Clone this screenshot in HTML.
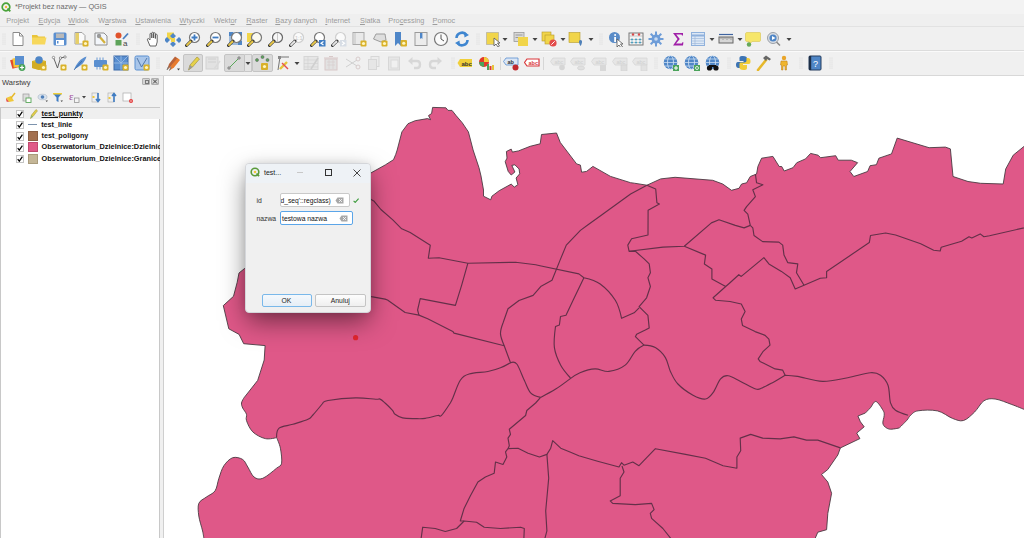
<!DOCTYPE html>
<html><head><meta charset="utf-8">
<style>
*{margin:0;padding:0;box-sizing:border-box}
html,body{width:1024px;height:538px;overflow:hidden;background:#f0f0f0;font-family:"Liberation Sans",sans-serif;position:relative}
.abs{position:absolute}
#title{left:0;top:0;width:1024px;height:14px;background:#f3f3f3}
#title span{position:absolute;left:15px;top:2px;font-size:7.3px;color:#6a6a6a;white-space:nowrap}
#menu{left:0;top:14px;width:1024px;height:12px;background:#efefef}
#menu span{position:absolute;top:2px;font-size:7.3px;color:#9c9c9c;white-space:nowrap}
#tb{left:0;top:27px;width:1024px;height:49px;background:#f0f0f0}
#map{left:164px;top:76px;width:860px;height:462px;background:#fff;overflow:hidden}
#panel{left:0;top:76px;width:163px;height:462px;background:#f0f0f0}
#split{left:163px;top:76px;width:1px;height:462px;background:#cfcfcf}
#tree{left:0;top:107px;width:160px;height:431px;background:#fff;border:1px solid #c8c8c8;border-bottom:none}
.row{position:absolute;left:0;width:158.5px;height:11px;overflow:hidden}
.row .cb{position:absolute;left:14.5px;top:1.5px;width:8.5px;height:8.5px;border:1px solid #c4c4c4;background:#fff}

.row .nm{position:absolute;left:40.6px;top:1.5px;line-height:8px;font-size:7.6px;font-weight:bold;color:#111;white-space:nowrap}
.row .sw{position:absolute;left:26.5px;top:0.5px;width:10px;height:10px}
#dlg{left:245px;top:162.8px;width:126.2px;height:150px;background:#f0f0f0;border:1px solid #d4d6da;border-radius:4px;box-shadow:0 10px 26px -2px rgba(0,0,0,0.5),0 0 8px rgba(0,0,0,0.08)}
</style></head><body>
<div id="title" class="abs"><svg class="abs" style="left:1px;top:2px" width="10" height="10" viewBox="0 0 10 10"><circle cx="5" cy="5" r="3.8" fill="none" stroke="#4aa33a" stroke-width="1.7"/><path d="M6.5 6.5 L9.3 9.3" stroke="#4aa33a" stroke-width="1.9"/><circle cx="5" cy="5" r="1.2" fill="#f0b83a"/></svg><span>*Projekt bez nazwy — QGIS</span></div>
<div id="menu" class="abs">
<span style="left:6.3px">Projekt</span><span style="left:38.5px"><u>E</u>dycja</span><span style="left:68.3px"><u>W</u>idok</span><span style="left:98.3px">W<u>a</u>rstwa</span><span style="left:135.3px"><u>U</u>stawienia</span><span style="left:179.5px"><u>W</u>tyczki</span><span style="left:214px">Wekt<u>o</u>r</span><span style="left:246.3px"><u>R</u>aster</span><span style="left:275.3px"><u>B</u>azy danych</span><span style="left:325.3px"><u>I</u>nternet</span><span style="left:360px"><u>S</u>iatka</span><span style="left:388.3px">Pro<u>c</u>essing</span><span style="left:432.5px"><u>P</u>omoc</span>
</div>
<div class="abs" style="left:0;top:26px;width:1024px;height:1px;background:#e2e2e2"></div><div id="tb" class="abs"><div class="abs" style="left:0;top:23px;width:1024px;height:1px;background:#dcdcdc"></div><div class="abs" style="left:0;top:24px;width:1024px;height:1px;background:#fafafa"></div><div class="abs" style="left:0;top:48px;width:1024px;height:1px;background:#d8d8d8"></div></div>
<div class="abs" style="left:183px;top:54px;width:20px;height:18px;background:#dadada;border:1px solid #c4c4c4;border-radius:2px"></div>
<div class="abs" style="left:224px;top:54px;width:21px;height:18px;background:#dadada;border:1px solid #c4c4c4;border-radius:2px 0 0 2px"></div>
<div class="abs" style="left:245px;top:54px;width:7px;height:18px;background:#e4e4e4;border:1px solid #c8c8c8;border-left:none"></div>
<div class="abs" style="left:252px;top:54px;width:21px;height:18px;background:#dadada;border:1px solid #c4c4c4;border-radius:2px"></div>
<div class="abs" style="left:543px;top:57px;width:1px;height:13px;background:#d6d6d6"></div>
<div class="abs" style="left:500px;top:57px;width:1px;height:13px;background:#d6d6d6"></div>
<svg class="abs" style="left:-4.0px;top:31px" width="16" height="16" viewBox="0 0 16 16"><g fill="#d2d2d2"><circle cx="7" cy="3" r=".5"/><circle cx="9" cy="3" r=".5"/><circle cx="7" cy="5" r=".5"/><circle cx="9" cy="5" r=".5"/><circle cx="7" cy="7" r=".5"/><circle cx="9" cy="7" r=".5"/><circle cx="7" cy="9" r=".5"/><circle cx="9" cy="9" r=".5"/><circle cx="7" cy="11" r=".5"/><circle cx="9" cy="11" r=".5"/><circle cx="7" cy="13" r=".5"/><circle cx="9" cy="13" r=".5"/></g></svg>
<svg class="abs" style="left:10.0px;top:31px" width="16" height="16" viewBox="0 0 16 16"><path d="M3 1.5 H9.5 L13 5 V14.5 H3 Z" fill="#fff" stroke="#8a8a8a" stroke-width="1"/><path d="M9.5 1.5 V5 H13" fill="none" stroke="#8a8a8a"/></svg>
<svg class="abs" style="left:30.5px;top:31px" width="16" height="16" viewBox="0 0 16 16"><path d="M1 4 H6 L7.5 5.5 H14 V13 H1 Z" fill="#e9c43a"/><path d="M1 6.5 H15.5 L14 13.5 H1 Z" fill="#f7d85c"/></svg>
<svg class="abs" style="left:51.5px;top:31px" width="16" height="16" viewBox="0 0 16 16"><rect x="1.5" y="1.5" width="13" height="13" rx="1.5" fill="#5a8fd0"/><rect x="4" y="2.5" width="8" height="4.5" fill="#b9b9b9"/><rect x="4" y="9" width="8" height="5" fill="#fff"/><rect x="5" y="10" width="1.5" height="2.5" fill="#5a8fd0"/></svg>
<svg class="abs" style="left:72.5px;top:31px" width="16" height="16" viewBox="0 0 16 16"><path d="M2 1.5 H9 L12 4.5 V13 H2 Z" fill="#fafafa" stroke="#a0a0a0"/><rect x="2.5" y="2" width="3.5" height="11" fill="#e6cf6a"/><rect x="9.5" y="9.5" width="6" height="6" rx="1" fill="#d9b12a"/><circle cx="12.5" cy="12.5" r="1.6" fill="#fff6c0"/></svg>
<svg class="abs" style="left:93.0px;top:31px" width="16" height="16" viewBox="0 0 16 16"><path d="M2 2 H11 L14 5 V14 H2 Z" fill="#f3f6fb" stroke="#8d8d8d"/><path d="M6 5 L12 12" stroke="#d4b13a" stroke-width="2.2"/><circle cx="6" cy="5" r="2.2" fill="#999"/></svg>
<svg class="abs" style="left:113.5px;top:31px" width="16" height="16" viewBox="0 0 16 16"><circle cx="4.5" cy="4.5" r="3" fill="#e0522b"/><path d="M9 8 L14 2.5" stroke="#4a7fc1" stroke-width="1.8"/><rect x="1.5" y="9" width="6" height="5.5" fill="#5ea35a"/><text x="9" y="14.5" font-size="8" font-family="Liberation Sans" fill="#444">a</text></svg>
<svg class="abs" style="left:129.5px;top:31px" width="16" height="16" viewBox="0 0 16 16"><g fill="#d2d2d2"><circle cx="7" cy="3" r=".5"/><circle cx="9" cy="3" r=".5"/><circle cx="7" cy="5" r=".5"/><circle cx="9" cy="5" r=".5"/><circle cx="7" cy="7" r=".5"/><circle cx="9" cy="7" r=".5"/><circle cx="7" cy="9" r=".5"/><circle cx="9" cy="9" r=".5"/><circle cx="7" cy="11" r=".5"/><circle cx="9" cy="11" r=".5"/><circle cx="7" cy="13" r=".5"/><circle cx="9" cy="13" r=".5"/></g></svg>
<svg class="abs" style="left:144.5px;top:31px" width="16" height="16" viewBox="0 0 16 16"><path d="M5 15 L2.5 9 C2 7.5 3.5 7 4.5 8.5 L5 9 V3 C5 2 6.8 2 6.8 3 V7 V2 C6.8 1 8.6 1 8.6 2 V7 V2.5 C8.6 1.5 10.4 1.5 10.4 2.5 V7.5 V4 C10.4 3 12.2 3 12.2 4 V11 L11 15 Z" fill="#fff" stroke="#555" stroke-width="0.9"/></svg>
<svg class="abs" style="left:164.5px;top:31px" width="16" height="16" viewBox="0 0 16 16"><rect x="2" y="1.5" width="7" height="7" fill="#f1d54a"/><path d="M8 2 L11 5 L8 8 L5 5Z M2 6 L5 9 L2 12 L-1 9Z M14 6 L17 9 L14 12 L11 9Z M8 10 L11 13 L8 16 L5 13Z" fill="#4f86c6"/><rect x="6" y="7" width="4" height="4" fill="#f1d54a"/></svg>
<svg class="abs" style="left:185.0px;top:31px" width="16" height="16" viewBox="0 0 16 16"><circle cx="9.5" cy="6.5" r="5" fill="#fff" stroke="#777" stroke-width="1.2"/><path d="M6 10 L1.5 14.5" stroke="#333" stroke-width="3" stroke-linecap="round"/><path d="M5.5 10.5 L2 14" stroke="#e8c84a" stroke-width="1.8" stroke-linecap="round"/><path d="M9.5 3.5 V9.5 M6.5 6.5 H12.5" stroke="#3f7cc2" stroke-width="1.8"/></svg>
<svg class="abs" style="left:206.0px;top:31px" width="16" height="16" viewBox="0 0 16 16"><circle cx="9.5" cy="6.5" r="5" fill="#fff" stroke="#777" stroke-width="1.2"/><path d="M6 10 L1.5 14.5" stroke="#333" stroke-width="3" stroke-linecap="round"/><path d="M5.5 10.5 L2 14" stroke="#e8c84a" stroke-width="1.8" stroke-linecap="round"/><path d="M6.5 6.5 H12.5" stroke="#3f7cc2" stroke-width="1.8"/></svg>
<svg class="abs" style="left:227.0px;top:31px" width="16" height="16" viewBox="0 0 16 16"><rect x="2" y="1" width="4" height="4" fill="#4f86c6"/><rect x="11" y="1" width="4" height="4" fill="#4f86c6"/><rect x="11" y="10" width="4" height="4" fill="#4f86c6"/><rect x="3" y="2" width="11" height="11" fill="none" stroke="#4f86c6" stroke-width="1"/><circle cx="9.5" cy="6.5" r="5" fill="#fff" stroke="#777" stroke-width="1.2"/><path d="M6 10 L1.5 14.5" stroke="#333" stroke-width="3" stroke-linecap="round"/><path d="M5.5 10.5 L2 14" stroke="#e8c84a" stroke-width="1.8" stroke-linecap="round"/></svg>
<svg class="abs" style="left:247.0px;top:31px" width="16" height="16" viewBox="0 0 16 16"><rect x="0" y="2" width="7" height="9" fill="#f1d54a"/><circle cx="9.5" cy="6.5" r="5" fill="#fafaf0" stroke="#777" stroke-width="1.2"/><path d="M6 10 L1.5 14.5" stroke="#333" stroke-width="3" stroke-linecap="round"/><path d="M5.5 10.5 L2 14" stroke="#e8c84a" stroke-width="1.8" stroke-linecap="round"/></svg>
<svg class="abs" style="left:268.0px;top:31px" width="16" height="16" viewBox="0 0 16 16"><rect x="3" y="2" width="6" height="9" fill="#fafafa"/><circle cx="9.5" cy="6.5" r="5" fill="#f7f7f7" stroke="#666" stroke-width="1.2"/><path d="M6 10 L1.5 14.5" stroke="#333" stroke-width="3" stroke-linecap="round"/><path d="M5.5 10.5 L2 14" stroke="#e8c84a" stroke-width="1.8" stroke-linecap="round"/><path d="M9.5 1.8 V11.2" stroke="#c9c9c9" stroke-width="1"/></svg>
<svg class="abs" style="left:289.0px;top:31px" width="16" height="16" viewBox="0 0 16 16"><circle cx="9.5" cy="6.5" r="5" fill="#fafafa" stroke="#cfcfcf" stroke-width="1.2"/><path d="M6 10 L1.5 14.5" stroke="#333" stroke-width="3" stroke-linecap="round"/><path d="M5.5 10.5 L2 14" stroke="#e9e9e9" stroke-width="1.8" stroke-linecap="round"/><text x="6" y="9" font-size="5.5" font-family="Liberation Sans" fill="#c4c4c4">1:1</text></svg>
<svg class="abs" style="left:309.5px;top:31px" width="16" height="16" viewBox="0 0 16 16"><circle cx="9.5" cy="6.5" r="5" fill="#fff" stroke="#777" stroke-width="1.2"/><path d="M6 10 L1.5 14.5" stroke="#333" stroke-width="3" stroke-linecap="round"/><path d="M5.5 10.5 L2 14" stroke="#e8c84a" stroke-width="1.8" stroke-linecap="round"/><rect x="9" y="9" width="6.5" height="6.5" fill="#3f7cc2"/><path d="M13.5 10.5 L11 12.2 L13.5 14" fill="none" stroke="#fff" stroke-width="1.2"/></svg>
<svg class="abs" style="left:331.0px;top:31px" width="16" height="16" viewBox="0 0 16 16"><circle cx="9.5" cy="6.5" r="5" fill="#fafafa" stroke="#cfcfcf" stroke-width="1.2"/><path d="M6 10 L1.5 14.5" stroke="#333" stroke-width="3" stroke-linecap="round"/><path d="M5.5 10.5 L2 14" stroke="#e5e5e5" stroke-width="1.8" stroke-linecap="round"/><rect x="9" y="9" width="6.5" height="6.5" fill="#d7dde5"/><path d="M11 10.5 L13.5 12.2 L11 14" fill="none" stroke="#fff" stroke-width="1.2"/></svg>
<svg class="abs" style="left:351.0px;top:31px" width="16" height="16" viewBox="0 0 16 16"><rect x="2" y="1.5" width="11" height="12" fill="#e9e9e9" stroke="#a9a9a9"/><rect x="2.5" y="2" width="2.5" height="11" fill="#d5d5d5"/><rect x="9.5" y="9.5" width="6" height="6" rx="1" fill="#d9b12a"/><circle cx="12.5" cy="12.5" r="1.6" fill="#fff6c0"/></svg>
<svg class="abs" style="left:371.5px;top:31px" width="16" height="16" viewBox="0 0 16 16"><path d="M1.5 8 L4 3 H13 L14 9 L9 11 Z" fill="#dedede" stroke="#9c9c9c"/><rect x="9.5" y="9.5" width="6" height="6" rx="1" fill="#d9b12a"/><circle cx="12.5" cy="12.5" r="1.6" fill="#fff6c0"/></svg>
<svg class="abs" style="left:392.0px;top:31px" width="16" height="16" viewBox="0 0 16 16"><path d="M3 1 H9 V15 L6 12 L3 15Z" fill="#4e86c8"/><rect x="8.5" y="9" width="6.5" height="6.5" rx="1" fill="#d9b12a"/><circle cx="11.75" cy="12.25" r="1.6" fill="#fff6c0"/></svg>
<svg class="abs" style="left:413.0px;top:31px" width="16" height="16" viewBox="0 0 16 16"><rect x="2" y="1.5" width="12" height="13" fill="#ececec" stroke="#9a9a9a"/><path d="M7 2 V8 L8.2 7 L9.4 8 V2" fill="#4e86c8"/></svg>
<svg class="abs" style="left:433.0px;top:31px" width="16" height="16" viewBox="0 0 16 16"><circle cx="8" cy="8" r="6.5" fill="#fbfbfb" stroke="#777" stroke-width="1.2"/><path d="M8 3.5 V8 L11 10" fill="none" stroke="#555" stroke-width="1"/></svg>
<svg class="abs" style="left:454.0px;top:31px" width="16" height="16" viewBox="0 0 16 16"><path d="M2.5 7 A5.5 5.5 0 0 1 12.5 4" fill="none" stroke="#3f86d0" stroke-width="2.6"/><path d="M13.5 9 A5.5 5.5 0 0 1 3.5 12" fill="none" stroke="#3f86d0" stroke-width="2.6"/><path d="M10 1 L15 4 L10.5 6.5Z M6 15 L1 12 L5.5 9.5Z" fill="#3f86d0"/></svg>
<svg class="abs" style="left:469.5px;top:31px" width="16" height="16" viewBox="0 0 16 16"><g fill="#d2d2d2"><circle cx="7" cy="3" r=".5"/><circle cx="9" cy="3" r=".5"/><circle cx="7" cy="5" r=".5"/><circle cx="9" cy="5" r=".5"/><circle cx="7" cy="7" r=".5"/><circle cx="9" cy="7" r=".5"/><circle cx="7" cy="9" r=".5"/><circle cx="9" cy="9" r=".5"/><circle cx="7" cy="11" r=".5"/><circle cx="9" cy="11" r=".5"/><circle cx="7" cy="13" r=".5"/><circle cx="9" cy="13" r=".5"/></g></svg>
<svg class="abs" style="left:484.5px;top:31px" width="16" height="16" viewBox="0 0 16 16"><rect x="1.5" y="1.5" width="12" height="12" fill="#f1d54a" stroke="#9a9a9a" stroke-dasharray="1 1"/><path d="M9 7 L9 15 L11 13 L13 16 L14.5 15 L12.5 12 L15 12 Z" fill="#fff" stroke="#555" stroke-width="0.8"/></svg>
<svg class="abs" style="left:497.0px;top:31px" width="16" height="16" viewBox="0 0 16 16"><path d="M5.5 7 H10.5 L8 10Z" fill="#444"/></svg>
<svg class="abs" style="left:513.0px;top:31px" width="16" height="16" viewBox="0 0 16 16"><rect x="1" y="1.5" width="10" height="9" fill="#d9d9d9" stroke="#9a9a9a" stroke-width="0.8"/><path d="M2.5 4 H9.5 M2.5 6.5 H9.5" stroke="#9a9a9a"/><rect x="5" y="6" width="10" height="9" fill="#f1d54a"/></svg>
<svg class="abs" style="left:526.5px;top:31px" width="16" height="16" viewBox="0 0 16 16"><path d="M5.5 7 H10.5 L8 10Z" fill="#444"/></svg>
<svg class="abs" style="left:541.0px;top:31px" width="16" height="16" viewBox="0 0 16 16"><rect x="1" y="1" width="9" height="9" fill="#f1d54a" stroke="#b59a2a" stroke-width="0.6"/><rect x="4" y="4" width="9" height="9" fill="#f1d54a" stroke="#b59a2a" stroke-width="0.6"/><circle cx="12" cy="12" r="3.6" fill="#e34b4b"/><path d="M10.3 13.7 L13.7 10.3" stroke="#fff" stroke-width="1"/></svg>
<svg class="abs" style="left:554.5px;top:31px" width="16" height="16" viewBox="0 0 16 16"><path d="M5.5 7 H10.5 L8 10Z" fill="#444"/></svg>
<svg class="abs" style="left:568.0px;top:31px" width="16" height="16" viewBox="0 0 16 16"><rect x="1" y="1.5" width="11" height="10" fill="#f1d54a" stroke="#b59a2a" stroke-width="0.6"/><path d="M12.5 9 C10.5 9 10.5 12 12.5 15 C14.5 12 14.5 9 12.5 9Z" fill="#4f80b8"/></svg>
<svg class="abs" style="left:582.5px;top:31px" width="16" height="16" viewBox="0 0 16 16"><path d="M5.5 7 H10.5 L8 10Z" fill="#444"/></svg>
<svg class="abs" style="left:593.0px;top:31px" width="16" height="16" viewBox="0 0 16 16"><g fill="#d2d2d2"><circle cx="7" cy="3" r=".5"/><circle cx="9" cy="3" r=".5"/><circle cx="7" cy="5" r=".5"/><circle cx="9" cy="5" r=".5"/><circle cx="7" cy="7" r=".5"/><circle cx="9" cy="7" r=".5"/><circle cx="7" cy="9" r=".5"/><circle cx="9" cy="9" r=".5"/><circle cx="7" cy="11" r=".5"/><circle cx="9" cy="11" r=".5"/><circle cx="7" cy="13" r=".5"/><circle cx="9" cy="13" r=".5"/></g></svg>
<svg class="abs" style="left:607.5px;top:31px" width="16" height="16" viewBox="0 0 16 16"><circle cx="6.5" cy="6.5" r="5.5" fill="#5a8cc8"/><rect x="6.2" y="6" width="1.8" height="5" fill="#fff"/><circle cx="7.1" cy="4" r="1" fill="#fff"/><path d="M9 8 L9 16 L11 14 L13 17 L14.5 16 L12.5 13 L15 13 Z" fill="#fff" stroke="#555" stroke-width="0.8"/></svg>
<svg class="abs" style="left:628.0px;top:31px" width="16" height="16" viewBox="0 0 16 16"><rect x="1" y="2" width="14" height="12" fill="#f4f4f4" stroke="#777"/><path d="M1 5 H15 M1 8.5 H15 M1 11.5 H15" stroke="#aaa" stroke-width="0.6"/><circle cx="5" cy="3.5" r="1.2" fill="#d94a4a"/><circle cx="11" cy="3.5" r="1.2" fill="#d94a4a"/><circle cx="4" cy="8.5" r="1.1" fill="#4aa0c0"/><circle cx="8" cy="8.5" r="1.1" fill="#4aa0c0"/><circle cx="12" cy="8.5" r="1.1" fill="#4aa0c0"/><circle cx="4" cy="11.5" r="1.1" fill="#4aa0c0"/><circle cx="8" cy="11.5" r="1.1" fill="#4aa0c0"/><circle cx="12" cy="11.5" r="1.1" fill="#4aa0c0"/></svg>
<svg class="abs" style="left:648.0px;top:31px" width="16" height="16" viewBox="0 0 16 16"><g fill="#6e9dd8"><circle cx="8" cy="8" r="4.5"/><rect x="7" y="0.5" width="2" height="15"/><rect x="0.5" y="7" width="15" height="2"/><rect x="7" y="0.5" width="2" height="15" transform="rotate(45 8 8)"/><rect x="7" y="0.5" width="2" height="15" transform="rotate(-45 8 8)"/></g><circle cx="8" cy="8" r="1.8" fill="#c9dbf1"/></svg>
<svg class="abs" style="left:669.5px;top:31px" width="16" height="16" viewBox="0 0 16 16"><path d="M3 2 H13 V4.5 H12 L11.5 3.5 H6.2 L9.8 8 L6 12.5 H11.8 L12.4 11.3 H13.4 L13 14.5 H3 L7.5 8 Z" fill="#a01fa8"/></svg>
<svg class="abs" style="left:689.5px;top:31px" width="16" height="16" viewBox="0 0 16 16"><rect x="1.5" y="1.5" width="13" height="13" fill="#dde8f5" stroke="#8fb1dc"/><path d="M1.5 4.5 H14.5" stroke="#8fb1dc" stroke-width="2"/><path d="M1.5 7.5 H14.5 M1.5 10 H14.5 M1.5 12.5 H14.5 M5 4 V14.5" stroke="#9db9dd" stroke-width="0.7"/></svg>
<svg class="abs" style="left:704.0px;top:31px" width="16" height="16" viewBox="0 0 16 16"><path d="M5.5 7 H10.5 L8 10Z" fill="#444"/></svg>
<svg class="abs" style="left:718.0px;top:31px" width="16" height="16" viewBox="0 0 16 16"><path d="M1 3.5 H15" stroke="#3f64a0" stroke-width="1.2"/><rect x="1" y="6" width="14" height="6" fill="#d6d6d6" stroke="#666"/><path d="M3 6 V8 M5 6 V9 M7 6 V8 M9 6 V9 M11 6 V8 M13 6 V9" stroke="#777" stroke-width="0.6"/></svg>
<svg class="abs" style="left:732.0px;top:31px" width="16" height="16" viewBox="0 0 16 16"><path d="M5.5 7 H10.5 L8 10Z" fill="#444"/></svg>
<svg class="abs" style="left:744.5px;top:31px" width="16" height="16" viewBox="0 0 16 16"><path d="M2 1.5 H14.5 C15.5 1.5 15.5 2 15.5 3 V9 C15.5 10 15 10.5 14 10.5 H7 L4 14 V10.5 H2 C1 10.5 0.5 10 0.5 9 V3 C0.5 2 1 1.5 2 1.5Z" fill="#f6e66a" stroke="#d9c550" stroke-width="0.6"/><circle cx="4" cy="13.5" r="2.2" fill="#66a85a"/></svg>
<svg class="abs" style="left:765.5px;top:31px" width="16" height="16" viewBox="0 0 16 16"><circle cx="7" cy="7" r="5.5" fill="#d9dde3" stroke="#9aa0a8"/><circle cx="7" cy="7" r="3.6" fill="#4f86c6"/><path d="M6 5 L9.5 7 L6 9Z" fill="#fff"/><path d="M10.5 11 L14 14.5" stroke="#888" stroke-width="1.5"/></svg>
<svg class="abs" style="left:780.5px;top:31px" width="16" height="16" viewBox="0 0 16 16"><path d="M5.5 7 H10.5 L8 10Z" fill="#444"/></svg>
<svg class="abs" style="left:-4.0px;top:55px" width="16" height="16" viewBox="0 0 16 16"><g fill="#d2d2d2"><circle cx="7" cy="3" r=".5"/><circle cx="9" cy="3" r=".5"/><circle cx="7" cy="5" r=".5"/><circle cx="9" cy="5" r=".5"/><circle cx="7" cy="7" r=".5"/><circle cx="9" cy="7" r=".5"/><circle cx="7" cy="9" r=".5"/><circle cx="9" cy="9" r=".5"/><circle cx="7" cy="11" r=".5"/><circle cx="9" cy="11" r=".5"/><circle cx="7" cy="13" r=".5"/><circle cx="9" cy="13" r=".5"/></g></svg>
<svg class="abs" style="left:10.0px;top:55px" width="16" height="16" viewBox="0 0 16 16"><rect x="1" y="4" width="9" height="9" fill="#e24b2b" transform="rotate(-15 5 8)"/><rect x="3" y="3" width="9" height="9" fill="#f1c83a" transform="rotate(-8 7 7)"/><rect x="5" y="1" width="9" height="9" fill="#5a8fd0"/><circle cx="12" cy="12.5" r="3.4" fill="#4aa35a"/><path d="M12 10.5 V14.5 M10 12.5 H14" stroke="#fff" stroke-width="1.2"/></svg>
<svg class="abs" style="left:31.0px;top:55px" width="16" height="16" viewBox="0 0 16 16"><path d="M1 6 L8 4 L15 6 V13 L8 15 L1 13Z" fill="#e3c23a"/><path d="M1 6 L8 8 L15 6 V13 L8 15 L1 13Z" fill="#d2ac24"/><circle cx="8" cy="5" r="3.8" fill="#4f86c6"/><rect x="9.5" y="9.5" width="6" height="6" rx="1" fill="#d9b12a"/><circle cx="12.5" cy="12.5" r="1.6" fill="#fff6c0"/></svg>
<svg class="abs" style="left:51.0px;top:55px" width="16" height="16" viewBox="0 0 16 16"><path d="M2.5 2.5 L6.5 13 L9.5 3 L14 2" fill="none" stroke="#555" stroke-width="0.9"/><circle cx="2.5" cy="2.5" r="1.2" fill="#fff" stroke="#555" stroke-width=".6"/><circle cx="14" cy="2" r="1.2" fill="#fff" stroke="#555" stroke-width=".6"/><circle cx="9.5" cy="3" r="1.2" fill="#fff" stroke="#555" stroke-width=".6"/><rect x="9.5" y="9.5" width="6" height="6" rx="1" fill="#d9b12a"/><circle cx="12.5" cy="12.5" r="1.6" fill="#fff6c0"/></svg>
<svg class="abs" style="left:72.0px;top:55px" width="16" height="16" viewBox="0 0 16 16"><path d="M2 15 C4 9 9 3 14.5 1.5 C13 7 9 11 3.5 13.5Z" fill="#5b8fd0"/><path d="M2 15 L10 6" stroke="#2d5f9e" stroke-width=".7"/><rect x="9.5" y="9.5" width="6" height="6" rx="1" fill="#d9b12a"/><circle cx="12.5" cy="12.5" r="1.6" fill="#fff6c0"/></svg>
<svg class="abs" style="left:93.0px;top:55px" width="16" height="16" viewBox="0 0 16 16"><rect x="1" y="5" width="13" height="7" rx="1" fill="#5a8fd0"/><path d="M4 2.5 V5 M7 2.5 V5 M10 2.5 V5 M4 12 V14.5 M7 12 V14.5 M10 12 V14.5" stroke="#5a8fd0" stroke-width="0.9"/><rect x="9.5" y="9.5" width="6" height="6" rx="1" fill="#d9b12a"/><circle cx="12.5" cy="12.5" r="1.6" fill="#fff6c0"/></svg>
<svg class="abs" style="left:113.0px;top:55px" width="16" height="16" viewBox="0 0 16 16"><rect x="1" y="1" width="14" height="14" fill="#5a8fd0" stroke="#3d6aa8"/><path d="M1 8 H15 M8 1 V15 M1 1 L8 8 M8 8 L15 1" stroke="#9fc0e8" stroke-width="0.8"/><rect x="9.5" y="9.5" width="6" height="6" rx="1" fill="#d9b12a"/><circle cx="12.5" cy="12.5" r="1.6" fill="#fff6c0"/></svg>
<svg class="abs" style="left:134.0px;top:55px" width="16" height="16" viewBox="0 0 16 16"><rect x="1" y="1" width="14" height="14" rx="1.5" fill="#a9c6ea" stroke="#5a8fd0"/><path d="M3 3 L7.5 12 L13 3" fill="none" stroke="#4a6f9e" stroke-width="0.9"/><rect x="9.5" y="9.5" width="6" height="6" rx="1" fill="#d9b12a"/><circle cx="12.5" cy="12.5" r="1.6" fill="#fff6c0"/></svg>
<svg class="abs" style="left:150.0px;top:55px" width="16" height="16" viewBox="0 0 16 16"><g fill="#d2d2d2"><circle cx="7" cy="3" r=".5"/><circle cx="9" cy="3" r=".5"/><circle cx="7" cy="5" r=".5"/><circle cx="9" cy="5" r=".5"/><circle cx="7" cy="7" r=".5"/><circle cx="9" cy="7" r=".5"/><circle cx="7" cy="9" r=".5"/><circle cx="9" cy="9" r=".5"/><circle cx="7" cy="11" r=".5"/><circle cx="9" cy="11" r=".5"/><circle cx="7" cy="13" r=".5"/><circle cx="9" cy="13" r=".5"/></g></svg>
<svg class="abs" style="left:164.5px;top:55px" width="16" height="16" viewBox="0 0 16 16"><path d="M2 15 L4 9 L10 1.5 L13 3.5 L6.5 11Z" fill="#b8633a"/><path d="M4.5 15.5 L6.5 10 L12.5 3 L15 5 L9 12.5Z" fill="#e77b2e"/><path d="M2 15 L3.5 11.5 M4.5 15.5 L6 12" stroke="#777" stroke-width="1"/><path d="M12 13.5 H15 L13.5 15.5Z" fill="#444"/></svg>
<svg class="abs" style="left:185.0px;top:55px" width="16" height="16" viewBox="0 0 16 16"><path d="M3.5 15 L5 10 L12 2 L14.5 4 L7.5 12Z" fill="#e6d24a" stroke="#9a8a30" stroke-width="0.6"/><path d="M3.5 15 L5 10 L7.5 12Z" fill="#999"/></svg>
<svg class="abs" style="left:204.5px;top:55px" width="16" height="16" viewBox="0 0 16 16"><rect x="1" y="2" width="12" height="12" fill="#e2e2e2" stroke="#d2d2d2"/><path d="M3 4 H11 M3 7 H11" stroke="#d0d0d0"/><path d="M9 14 L15 6" stroke="#dadada" stroke-width="1.6"/></svg>
<svg class="abs" style="left:226.0px;top:55px" width="16" height="16" viewBox="0 0 16 16"><path d="M3 13 L13 3" stroke="#5aa75a" stroke-width="1"/><circle cx="3" cy="13" r="1.3" fill="#aaa" stroke="#666" stroke-width=".5"/><circle cx="13" cy="3" r="1.3" fill="#aaa" stroke="#666" stroke-width=".5"/></svg>
<svg class="abs" style="left:240.0px;top:55px" width="16" height="16" viewBox="0 0 16 16"><path d="M5.5 7 H10.5 L8 10Z" fill="#444"/></svg>
<svg class="abs" style="left:254.0px;top:55px" width="16" height="16" viewBox="0 0 16 16"><circle cx="3" cy="5" r="1.5" fill="#5aa75a" stroke="#555" stroke-width=".5"/><circle cx="8.5" cy="2" r="1.5" fill="#5aa75a" stroke="#555" stroke-width=".5"/><circle cx="13.5" cy="5" r="1.5" fill="#5aa75a" stroke="#555" stroke-width=".5"/><rect x="7" y="8" width="7" height="7" rx="1" fill="#d9b12a"/><circle cx="10.5" cy="11.5" r="1.6" fill="#fff6c0"/></svg>
<svg class="abs" style="left:274.5px;top:55px" width="16" height="16" viewBox="0 0 16 16"><path d="M3 15 L5 2 M5 2 H14" stroke="#555" stroke-width="0.8"/><rect x="3" y="1" width="3" height="3" fill="#888"/><path d="M5 14 L12 7" stroke="#e6c43a" stroke-width="2.4"/><path d="M7 8 L13 14" stroke="#e65050" stroke-width="1.4"/></svg>
<svg class="abs" style="left:289.0px;top:55px" width="16" height="16" viewBox="0 0 16 16"><path d="M5.5 7 H10.5 L8 10Z" fill="#444"/></svg>
<svg class="abs" style="left:303.0px;top:55px" width="16" height="16" viewBox="0 0 16 16"><rect x="1" y="1.5" width="14" height="13" fill="#e6e6e6" stroke="#d6d6d6"/><path d="M1 5 H15 M1 8.5 H15 M1 12 H15 M5 1.5 V14.5" stroke="#d3d3d3" stroke-width=".7"/><path d="M8 14 L15 3" stroke="#cfcfcf" stroke-width="1.6"/></svg>
<svg class="abs" style="left:323.0px;top:55px" width="16" height="16" viewBox="0 0 16 16"><rect x="2" y="4" width="12" height="11" fill="#e2e2e2" stroke="#d8c8c8"/><path d="M1 3 H15 M6 1.5 H10" stroke="#d8c8c8" stroke-width="1.2"/><path d="M4 7 H12 M4 10 H12 M6 5 V14 M10 5 V14" stroke="#d6cccc" stroke-width=".6"/></svg>
<svg class="abs" style="left:344.5px;top:55px" width="16" height="16" viewBox="0 0 16 16"><path d="M1 4 L12 11 M1 12 L12 5" stroke="#d0d0d0" stroke-width="1"/><circle cx="13" cy="4" r="2" fill="none" stroke="#d8cccc"/><circle cx="13" cy="12" r="2" fill="none" stroke="#d8cccc"/></svg>
<svg class="abs" style="left:366.0px;top:55px" width="16" height="16" viewBox="0 0 16 16"><rect x="5" y="1.5" width="8" height="10" fill="#ececec" stroke="#d7d7d7"/><rect x="2.5" y="4.5" width="8" height="10" fill="#e6e6e6" stroke="#d7d7d7"/></svg>
<svg class="abs" style="left:386.0px;top:55px" width="16" height="16" viewBox="0 0 16 16"><rect x="2.5" y="2" width="11" height="13" fill="#e6e6e6" stroke="#d7d7d7"/><rect x="5" y="5" width="7" height="8" fill="#f0f0f0" stroke="#dadada"/></svg>
<svg class="abs" style="left:407.0px;top:55px" width="16" height="16" viewBox="0 0 16 16"><path d="M4 6 H10 C14 6 14 13 10 13 H7" fill="none" stroke="#d7d7d7" stroke-width="2.4"/><path d="M1 6 L5.5 2 V10Z" fill="#d7d7d7"/></svg>
<svg class="abs" style="left:427.0px;top:55px" width="16" height="16" viewBox="0 0 16 16"><path d="M12 6 H6 C2 6 2 13 6 13 H9" fill="none" stroke="#d7d7d7" stroke-width="2.4"/><path d="M15 6 L10.5 2 V10Z" fill="#d7d7d7"/></svg>
<svg class="abs" style="left:444.5px;top:55px" width="16" height="16" viewBox="0 0 16 16"><g fill="#d2d2d2"><circle cx="7" cy="3" r=".5"/><circle cx="9" cy="3" r=".5"/><circle cx="7" cy="5" r=".5"/><circle cx="9" cy="5" r=".5"/><circle cx="7" cy="7" r=".5"/><circle cx="9" cy="7" r=".5"/><circle cx="7" cy="9" r=".5"/><circle cx="9" cy="9" r=".5"/><circle cx="7" cy="11" r=".5"/><circle cx="9" cy="11" r=".5"/><circle cx="7" cy="13" r=".5"/><circle cx="9" cy="13" r=".5"/></g></svg>
<svg class="abs" style="left:457.0px;top:55px" width="16" height="16" viewBox="0 0 16 16"><path d="M3 4 H15 V12 H3 L0.5 8Z" fill="#f0cf3a"/><text x="4.5" y="10.5" font-size="6" font-family="Liberation Sans" font-weight="bold" fill="#333">abc</text></svg>
<svg class="abs" style="left:478.0px;top:55px" width="16" height="16" viewBox="0 0 16 16"><circle cx="6" cy="7" r="5" fill="#e23a2a"/><path d="M6 7 L6 2 A5 5 0 0 1 11 7Z" fill="#f0cf3a"/><path d="M6 7 L1 7 A5 5 0 0 0 6 12Z" fill="#4aa35a"/><rect x="9" y="9" width="2" height="6" fill="#4aa35a"/><rect x="11.5" y="11" width="2" height="4" fill="#e23a2a"/><rect x="14" y="10" width="2" height="5" fill="#e6c43a"/></svg>
<svg class="abs" style="left:503.0px;top:55px" width="16" height="16" viewBox="0 0 16 16"><path d="M3 3 H15 V10 H3 L0.5 6.5Z" fill="#dbe6f5" stroke="#5a8fd0" stroke-width=".8"/><text x="4.5" y="9" font-size="5.5" font-family="Liberation Sans" font-weight="bold" fill="#333">ab</text><circle cx="12.5" cy="12.5" r="3" fill="#c0282d"/></svg>
<svg class="abs" style="left:524.0px;top:55px" width="16" height="16" viewBox="0 0 16 16"><path d="M3 4 H15 V11 H3 L0.5 7.5Z" fill="#fff" stroke="#d9373a" stroke-width="1.2"/><text x="4.5" y="10" font-size="5.5" font-family="Liberation Sans" font-weight="bold" fill="#d9373a">abc</text></svg>
<svg class="abs" style="left:549.5px;top:55px" width="16" height="16" viewBox="0 0 16 16"><path d="M3 3 H15 V10 H3 L0.5 6.5Z" fill="#e6e6e6" stroke="#d6d6d6" stroke-width=".8"/><text x="4.5" y="9" font-size="5.5" font-family="Liberation Sans" fill="#cfcfcf">abc</text><circle cx="12" cy="12.5" r="2.8" fill="#d6d6d6"/></svg>
<svg class="abs" style="left:569.5px;top:55px" width="16" height="16" viewBox="0 0 16 16"><path d="M3 3 H15 V10 H3 L0.5 6.5Z" fill="#e6e6e6" stroke="#d6d6d6" stroke-width=".8"/><text x="4.5" y="9" font-size="5.5" font-family="Liberation Sans" fill="#cfcfcf">abc</text><ellipse cx="11" cy="13" rx="3.5" ry="2" fill="#e0e0e0" stroke="#cfcfcf" stroke-width=".6"/></svg>
<svg class="abs" style="left:591.0px;top:55px" width="16" height="16" viewBox="0 0 16 16"><path d="M3 3 H15 V10 H3 L0.5 6.5Z" fill="#e6e6e6" stroke="#d6d6d6" stroke-width=".8"/><text x="4.5" y="9" font-size="5.5" font-family="Liberation Sans" fill="#cfcfcf">abc</text><rect x="9" y="10" width="6" height="6" fill="#d8d8d8"/></svg>
<svg class="abs" style="left:611.5px;top:55px" width="16" height="16" viewBox="0 0 16 16"><path d="M3 3 H15 V10 H3 L0.5 6.5Z" fill="#e6e6e6" stroke="#d6d6d6" stroke-width=".8"/><text x="4.5" y="9" font-size="5.5" font-family="Liberation Sans" fill="#cfcfcf">abc</text><rect x="9" y="10" width="6" height="6" fill="#dedede" stroke="#cfcfcf" stroke-width=".6"/></svg>
<svg class="abs" style="left:632.0px;top:55px" width="16" height="16" viewBox="0 0 16 16"><path d="M3 3 H15 V10 H3 L0.5 6.5Z" fill="#e6e6e6" stroke="#d6d6d6" stroke-width=".8"/><text x="4.5" y="9" font-size="5.5" font-family="Liberation Sans" fill="#cfcfcf">abc</text><rect x="9" y="10" width="6" height="6" fill="#e2e2e2" stroke="#d2d2d2" stroke-width=".6"/></svg>
<svg class="abs" style="left:648.0px;top:55px" width="16" height="16" viewBox="0 0 16 16"><g fill="#d2d2d2"><circle cx="7" cy="3" r=".5"/><circle cx="9" cy="3" r=".5"/><circle cx="7" cy="5" r=".5"/><circle cx="9" cy="5" r=".5"/><circle cx="7" cy="7" r=".5"/><circle cx="9" cy="7" r=".5"/><circle cx="7" cy="9" r=".5"/><circle cx="9" cy="9" r=".5"/><circle cx="7" cy="11" r=".5"/><circle cx="9" cy="11" r=".5"/><circle cx="7" cy="13" r=".5"/><circle cx="9" cy="13" r=".5"/></g></svg>
<svg class="abs" style="left:663.0px;top:55px" width="16" height="16" viewBox="0 0 16 16"><circle cx="7.5" cy="7.5" r="6.8" fill="#4f86c6"/><ellipse cx="7.5" cy="7.5" rx="3" ry="6.8" fill="none" stroke="#d7e6f6" stroke-width=".8"/><path d="M0.7 7.5 H14.3 M2 4 H13 M2 11 H13" stroke="#d7e6f6" stroke-width=".7"/><rect x="10" y="10" width="6" height="6" fill="#4aa35a"/><path d="M13 11 V15 M11 13 H15" stroke="#fff" stroke-width="1"/></svg>
<svg class="abs" style="left:684.0px;top:55px" width="16" height="16" viewBox="0 0 16 16"><circle cx="7.5" cy="7.5" r="6.8" fill="#4f86c6"/><ellipse cx="7.5" cy="7.5" rx="3" ry="6.8" fill="none" stroke="#d7e6f6" stroke-width=".8"/><path d="M0.7 7.5 H14.3 M2 4 H13 M2 11 H13" stroke="#d7e6f6" stroke-width=".7"/><rect x="10" y="10" width="6" height="6" fill="#4aa35a"/><circle cx="13" cy="13" r="1.5" fill="none" stroke="#fff" stroke-width=".8"/></svg>
<svg class="abs" style="left:704.5px;top:55px" width="16" height="16" viewBox="0 0 16 16"><circle cx="7.5" cy="7.5" r="6.8" fill="#4f86c6"/><ellipse cx="7.5" cy="7.5" rx="3" ry="6.8" fill="none" stroke="#d7e6f6" stroke-width=".8"/><path d="M0.7 7.5 H14.3 M2 4 H13 M2 11 H13" stroke="#d7e6f6" stroke-width=".7"/><circle cx="4.5" cy="13" r="2.6" fill="#111"/><circle cx="11" cy="13" r="2.6" fill="#111"/><rect x="4" y="10" width="7" height="2" fill="#111"/></svg>
<svg class="abs" style="left:721.0px;top:55px" width="16" height="16" viewBox="0 0 16 16"><g fill="#d2d2d2"><circle cx="7" cy="3" r=".5"/><circle cx="9" cy="3" r=".5"/><circle cx="7" cy="5" r=".5"/><circle cx="9" cy="5" r=".5"/><circle cx="7" cy="7" r=".5"/><circle cx="9" cy="7" r=".5"/><circle cx="7" cy="9" r=".5"/><circle cx="9" cy="9" r=".5"/><circle cx="7" cy="11" r=".5"/><circle cx="9" cy="11" r=".5"/><circle cx="7" cy="13" r=".5"/><circle cx="9" cy="13" r=".5"/></g></svg>
<svg class="abs" style="left:734.5px;top:55px" width="16" height="16" viewBox="0 0 16 16"><path d="M8 1 C4 1 4.5 2.5 4.5 4 V6 H8.5 V7 H3 C1 7 1 9 1 10 C1 12 2 13 3.5 13 H5 V10.5 C5 9.5 6 8.5 7 8.5 H10.5 C11.5 8.5 12 8 12 7 V3.5 C12 2 11 1 8 1Z" fill="#3d74b4"/><path d="M8.5 15 C12.5 15 12 13.5 12 12 V10 H8 V9 H13.5 C15.5 9 15.5 7 15.5 6 C15.5 4 14.5 3 13 3 H11.5 V5.5 C11.5 6.5 10.5 7.5 9.5 7.5 H6 C5 7.5 4.5 8 4.5 9 V12.5 C4.5 14 5.5 15 8.5 15Z" fill="#f2cd3a"/></svg>
<svg class="abs" style="left:755.5px;top:55px" width="16" height="16" viewBox="0 0 16 16"><path d="M2 15 L10 5" stroke="#e6b82a" stroke-width="2.6" stroke-linecap="round"/><path d="M7 3 L10 0.5 L15 4 L13.5 5.5 L11 4 L10 6Z" fill="#666"/></svg>
<svg class="abs" style="left:775.5px;top:55px" width="16" height="16" viewBox="0 0 16 16"><circle cx="8" cy="3" r="2.2" fill="#e9a52a"/><path d="M5 6 H11 L11.5 10 H10.5 V15 H9 V11 H7 V15 H5.5 V10 H4.5Z" fill="#f0b52e" stroke="#b8781a" stroke-width=".5"/></svg>
<svg class="abs" style="left:793.0px;top:55px" width="16" height="16" viewBox="0 0 16 16"><g fill="#d2d2d2"><circle cx="7" cy="3" r=".5"/><circle cx="9" cy="3" r=".5"/><circle cx="7" cy="5" r=".5"/><circle cx="9" cy="5" r=".5"/><circle cx="7" cy="7" r=".5"/><circle cx="9" cy="7" r=".5"/><circle cx="7" cy="9" r=".5"/><circle cx="9" cy="9" r=".5"/><circle cx="7" cy="11" r=".5"/><circle cx="9" cy="11" r=".5"/><circle cx="7" cy="13" r=".5"/><circle cx="9" cy="13" r=".5"/></g></svg>
<svg class="abs" style="left:807.0px;top:55px" width="16" height="16" viewBox="0 0 16 16"><rect x="2" y="1" width="12" height="14" rx="1" fill="#4f86c6" stroke="#243c5e"/><rect x="2" y="1" width="2.2" height="14" fill="#1e2f47"/><text x="6" y="11.5" font-size="9" font-family="Liberation Sans" fill="#fff">?</text></svg>
<svg class="abs" style="left:823.0px;top:55px" width="16" height="16" viewBox="0 0 16 16"><g fill="#d2d2d2"><circle cx="7" cy="3" r=".5"/><circle cx="9" cy="3" r=".5"/><circle cx="7" cy="5" r=".5"/><circle cx="9" cy="5" r=".5"/><circle cx="7" cy="7" r=".5"/><circle cx="9" cy="7" r=".5"/><circle cx="7" cy="9" r=".5"/><circle cx="9" cy="9" r=".5"/><circle cx="7" cy="11" r=".5"/><circle cx="9" cy="11" r=".5"/><circle cx="7" cy="13" r=".5"/><circle cx="9" cy="13" r=".5"/></g></svg>
<div id="panel" class="abs">
<span class="abs" style="left:2px;top:2px;font-size:7.5px;color:#3a3a3a">Warstwy</span>
<div class="abs" style="left:142px;top:2px;width:8px;height:7px;background:#d4d4d4;border:1px solid #b0b0b0;border-radius:1px"><div class="abs" style="left:1.5px;top:1px;width:4px;height:4px;border:1px solid #777"></div></div>
<div class="abs" style="left:151px;top:2px;width:8px;height:7px;background:#d4d4d4;border:1px solid #b0b0b0;border-radius:1px"><svg class="abs" style="left:0;top:0" width="6" height="5" viewBox="0 0 6 5"><path d="M1 0.5 L5 4.5 M5 0.5 L1 4.5" stroke="#444" stroke-width="1"/></svg></div>
<svg class="abs" style="left:5.0px;top:15.7px" width="11" height="11" viewBox="0 0 11 11"><path d="M1 6 L6 4 L9 9 L4 10Z" fill="#f0c83a"/><path d="M1 6 L4 10 L1.5 9.5Z" fill="#e23a3a"/><path d="M6 6 L10 1" stroke="#e6b82a" stroke-width="1.5"/></svg>
<svg class="abs" style="left:20.5px;top:15.7px" width="11" height="11" viewBox="0 0 11 11"><rect x="2" y="2" width="6" height="7" fill="#ddd" stroke="#999" stroke-width=".7"/><rect x="5" y="6" width="5" height="4.5" fill="#fff" stroke="#5aa75a" stroke-width=".9"/></svg>
<svg class="abs" style="left:36.5px;top:15.7px" width="11" height="11" viewBox="0 0 11 11"><ellipse cx="5.5" cy="5" rx="4.5" ry="2.8" fill="#d8e2ee" stroke="#9aa8b8" stroke-width=".5"/><circle cx="5.5" cy="5" r="1.8" fill="#4f7fb8"/><path d="M8.5 8.5 H11 L9.75 10Z" fill="#444"/></svg>
<svg class="abs" style="left:52.0px;top:15.7px" width="11" height="11" viewBox="0 0 11 11"><path d="M1 1.5 H10 L6.5 5.5 V10 L4.5 9 V5.5Z" fill="#3f7cc2"/><rect x="1" y="1" width="9" height="1.5" fill="#f0cf3a"/><path d="M8.5 8.5 H11 L9.75 10Z" fill="#444"/></svg>
<svg class="abs" style="left:69.0px;top:15.7px" width="11" height="11" viewBox="0 0 11 11"><text x="0" y="8" font-size="11" font-family="Liberation Serif" fill="#a04a9a">&#949;</text><rect x="5.5" y="6" width="4.5" height="4.5" fill="#f4f4f4" stroke="#8a8a8a" stroke-width=".7"/></svg>
<svg class="abs" style="left:91.0px;top:15.7px" width="11" height="11" viewBox="0 0 11 11"><rect x="1" y="1" width="6" height="9" fill="#eee" stroke="#aaa" stroke-width=".6"/><path d="M7 1 V9 M5 7 L7 9.5 L9 7" stroke="#3f7cc2" stroke-width="1.6" fill="none"/><rect x="1.5" y="4" width="2" height="2" fill="#f0c83a"/></svg>
<svg class="abs" style="left:106.5px;top:15.7px" width="11" height="11" viewBox="0 0 11 11"><rect x="1" y="1" width="6" height="9" fill="#eee" stroke="#aaa" stroke-width=".6"/><path d="M7 10 V2 M5 4 L7 1.5 L9 4" stroke="#3f7cc2" stroke-width="1.6" fill="none"/><rect x="1.5" y="5" width="2" height="2" fill="#f0c83a"/></svg>
<svg class="abs" style="left:122.0px;top:15.7px" width="11" height="11" viewBox="0 0 11 11"><rect x="1" y="1" width="8" height="8" fill="#fff" stroke="#aaa" stroke-width=".7"/><circle cx="9" cy="9" r="2" fill="#e23a3a"/><path d="M8 9 H10" stroke="#fff" stroke-width=".7"/></svg>
<svg class="abs" style="left:82px;top:20px" width="4" height="3" viewBox="0 0 4 3"><path d="M0 0 H4 L2 2.5Z" fill="#444"/></svg>
</div>
<div id="split" class="abs"></div>
<div id="tree" class="abs">
<div class="row" style="top:0px;background:#efefef;height:11px"><div class="cb"><svg class="abs" style="left:0.5px;top:0.5px" width="6" height="6" viewBox="0 0 6 6"><path d="M0.7 3.2 L2.3 5.2 L5.4 0.6" fill="none" stroke="#000" stroke-width="1.2"/></svg></div><svg class="abs" style="left:28px;top:1px" width="9" height="10" viewBox="0 0 9 10"><path d="M1.5 9.5 L2.5 6 L7 0.5 L8.5 1.8 L4 7.5Z" fill="#e2cf48" stroke="#a09030" stroke-width=".5"/><path d="M1.5 9.5 L2.5 6 L4 7.5Z" fill="#8fb070"/></svg><span class="nm" style="text-decoration:underline;font-size:7.35px">test_punkty</span></div>
<div class="row" style="top:11.3px"><div class="cb"><svg class="abs" style="left:0.5px;top:0.5px" width="6" height="6" viewBox="0 0 6 6"><path d="M0.7 3.2 L2.3 5.2 L5.4 0.6" fill="none" stroke="#000" stroke-width="1.2"/></svg></div><div class="abs" style="left:27px;top:5px;width:9px;height:1px;background:#7d93ad"></div><span class="nm" style="left:40.2px;font-size:7.2px">test_linie</span></div>
<div class="row" style="top:22.6px"><div class="cb"><svg class="abs" style="left:0.5px;top:0.5px" width="6" height="6" viewBox="0 0 6 6"><path d="M0.7 3.2 L2.3 5.2 L5.4 0.6" fill="none" stroke="#000" stroke-width="1.2"/></svg></div><div class="sw" style="background:#a3704f;border:1px solid #8a5e42"></div><span class="nm" style="font-size:7.2px">test_poligony</span></div>
<div class="row" style="top:33.9px"><div class="cb"><svg class="abs" style="left:0.5px;top:0.5px" width="6" height="6" viewBox="0 0 6 6"><path d="M0.7 3.2 L2.3 5.2 L5.4 0.6" fill="none" stroke="#000" stroke-width="1.2"/></svg></div><div class="sw" style="background:#e05a88;border:1px solid #c04a70"></div><span class="nm" style="font-size:7.35px">Obserwatorium_Dzielnice:Dzielnice</span></div>
<div class="row" style="top:45.2px"><div class="cb"><svg class="abs" style="left:0.5px;top:0.5px" width="6" height="6" viewBox="0 0 6 6"><path d="M0.7 3.2 L2.3 5.2 L5.4 0.6" fill="none" stroke="#000" stroke-width="1.2"/></svg></div><div class="sw" style="background:#c4b697;border:1px solid #a99b7c"></div><span class="nm" style="font-size:7.35px">Obserwatorium_Dzielnice:Granice</span></div>
</div>
<div id="map" class="abs"><svg width="860" height="462" viewBox="0 0 860 462" style="position:absolute;left:0;top:0">
<path d="M39.8 469.0 L39.8 462.0 C39.8 462.0 39.4 458.7 38.6 455.0 C37.8 451.3 35.4 444.6 34.8 440.0 C34.2 435.4 33.6 430.5 34.8 427.4 C36.1 424.2 39.6 423.2 42.3 421.1 C45.0 419.0 49.0 417.9 51.1 414.8 C53.2 411.7 53.4 406.5 54.9 402.3 C56.4 398.1 57.6 393.1 59.9 389.7 C62.2 386.3 65.6 382.7 68.7 381.7 C71.8 380.7 76.2 381.9 78.7 383.5 C81.2 385.1 81.9 388.1 83.8 391.0 C85.7 393.9 87.5 399.1 90.0 401.0 C92.5 402.9 95.0 403.8 98.8 402.3 C102.6 400.8 109.5 394.7 112.6 392.2 C115.7 389.7 117.0 390.5 117.6 387.2 C118.2 383.9 117.2 376.5 116.4 372.2 C115.6 367.9 112.6 361.6 112.6 361.6 C112.6 361.6 105.3 363.6 101.3 362.6 C97.3 361.7 91.9 358.9 88.8 355.9 C85.7 352.9 83.5 347.5 82.5 344.6 C81.5 341.7 83.1 340.4 82.5 338.3 C81.9 336.2 79.5 333.9 78.7 332.0 C77.9 330.1 77.3 328.7 77.5 327.0 C77.7 325.3 79.9 321.9 79.9 321.9 L93.7 304.4 L100.2 284.0 L101.1 269.6 L79.7 267.7 L75.1 258.4 L64.8 252.8 L59.3 229.6 L69.5 220.3 L73.2 206.3 L75.0 197.0 L80.7 192.4 L136.0 144.0 L208.0 96.3 L221.3 88.9 L229.5 83.7 L231.7 78.5 L233.2 74.0 L237.9 55.9 L244.0 47.7 L251.2 44.7 L263.5 42.6 L266.6 43.7 L264.5 39.6 L267.6 37.5 L268.6 31.4 L281.9 31.8 L284.0 34.4 L288.0 34.4 L292.1 39.6 L298.2 46.7 L304.4 55.9 L309.1 74.0 L315.0 91.8 L317.0 100.0 L319.5 114.0 L319.5 120.2 L326.7 123.8 L327.9 120.2 L335.2 114.7 L347.2 108.1 L350.3 111.1 L353.9 108.7 L352.1 102.0 L355.7 97.8 L355.1 93.0 L350.9 88.8 L347.8 89.4 L350.9 96.0 L347.2 99.0 L344.2 95.4 L341.2 85.7 L343.0 82.1 L342.4 75.5 L347.2 73.1 L348.4 76.1 L354.5 74.9 L366.2 70.3 L376.2 67.8 L377.5 58.5 L392.5 57.0 L396.3 66.5 L412.6 87.9 L416.4 89.1 L417.6 96.2 L422.6 95.4 L428.9 90.4 L446.5 100.4 L466.6 106.7 L470.3 107.2 L482.9 109.2 L496.7 102.9 L511.1 101.3 L548.7 104.3 L558.7 108.0 L567.5 114.3 L575.0 112.3 L577.6 108.0 L582.6 106.8 L586.3 100.5 L592.6 98.0 L593.9 90.5 L597.6 82.2 L608.9 80.4 L615.2 90.5 L617.7 90.5 L620.2 95.0 L629.0 91.7 L632.8 86.7 L641.5 82.9 L646.6 77.4 L654.1 79.2 L656.6 81.7 L671.7 79.7 L674.2 84.2 L687.3 84.2 L693.6 86.7 L686.0 95.5 L689.8 100.5 L703.6 95.5 L706.1 89.7 L712.4 88.7 L714.9 82.2 L727.5 77.9 L733.2 62.1 L765.1 71.7 L781.4 71.1 L786.4 72.9 L789.0 100.5 L804.0 105.5 L816.6 107.3 L839.2 108.0 L841.7 93.0 L849.2 79.2 L860.0 70.4 L866.0 66.0 L866.0 335.0 L860.0 333.4 C860.0 333.4 852.6 330.2 847.8 328.5 C843.0 326.8 835.8 323.6 831.1 323.0 C826.5 322.4 823.3 322.6 819.9 324.8 C816.5 327.0 814.0 332.7 810.6 336.0 C807.2 339.3 803.2 343.4 799.5 344.5 C795.8 345.6 792.6 343.9 788.3 342.3 C784.0 340.7 779.2 336.1 773.5 334.9 C767.8 333.6 758.6 334.1 754.1 334.8 C749.6 335.5 748.5 337.7 746.6 339.3 C744.7 340.9 744.7 342.2 742.8 344.3 C740.9 346.4 735.3 351.9 735.3 351.9 C735.3 351.9 727.9 353.7 725.2 353.1 C722.5 352.5 719.8 350.4 719.0 348.1 C718.2 345.8 720.2 341.6 720.2 339.3 C720.2 337.0 720.4 336.6 719.0 334.3 C717.6 332.0 714.0 325.9 711.9 325.5 C709.8 325.1 708.1 329.9 706.4 331.8 C704.6 333.7 701.4 337.0 701.4 337.0 L693.9 340.0 L696.4 345.8 L700.2 350.8 L692.7 357.1 L695.9 362.6 L676.4 371.9 L673.8 379.0 L663.8 393.5 L657.5 398.5 L663.8 406.0 L667.6 417.3 L663.8 437.4 L662.6 453.7 L653.8 456.2 L651.3 462.0 L651.3 469.0 L39.8 469.0Z" fill="#df5888" stroke="#4a3a42" stroke-width="0.9" stroke-linejoin="round"/>
<g fill="none" stroke="#643049" stroke-width="1.15" stroke-linejoin="round">
<path d="M196.0 117.0 L210.2 125.3 L216.9 133.5 L228.8 143.9 L237.7 152.8 L246.2 156.6 L266.3 169.2 L264.3 182.2 L275.0 181.7 L303.9 187.2 L351.6 186.2 L371.7 188.7 L376.0 189.7 L414.9 197.9 L419.9 201.7 C419.9 201.7 431.0 204.2 436.2 208.0 C441.4 211.8 447.7 218.6 451.3 224.3 C454.9 230.0 457.6 242.3 457.6 242.3 L470.1 236.8 L475.1 231.8"/>
<path d="M303.9 187.2 L297.6 209.3 L291.4 229.4 L256.2 222.6 L253.6 234.0 L254.9 239.1"/>
<path d="M196.0 218.0 L207.3 220.6 L221.1 223.1 L223.5 224.0 L241.1 236.5 L254.9 239.1 L263.7 242.8 L288.8 255.4 L290.0 257.1 L340.2 269.7"/>
<path d="M482.9 109.2 L466.6 118.0 L439.0 138.0 L423.7 149.0 L416.4 154.4 L402.3 169.1 L396.1 184.1 L388.0 204.3 L376.7 210.6 L369.1 219.4 L355.0 224.5 L344.0 232.8 L339.0 247.0 C339.0 247.0 336.3 254.1 336.5 257.9 C336.7 261.7 340.2 269.7 340.2 269.7 L346.5 286.7 C346.5 286.7 350.5 285.1 352.8 288.0 C355.1 290.9 358.0 299.5 360.3 304.3 C362.6 309.1 363.9 314.0 366.6 316.8 C369.3 319.6 376.6 321.4 376.6 321.4"/>
<path d="M346.5 286.7 C346.5 286.7 340.3 290.3 336.5 291.8 C332.7 293.3 329.1 294.5 323.9 295.5 C318.7 296.5 309.7 296.5 305.1 298.0 C300.5 299.5 299.0 300.3 296.3 304.3 C293.6 308.3 290.5 318.1 288.8 321.9 C287.1 325.7 286.3 327.0 286.3 327.0 C286.3 327.0 279.6 337.3 277.5 339.4 C275.4 341.5 276.5 339.0 273.8 339.5 C271.1 340.0 265.0 341.9 261.2 342.4 C257.4 342.9 255.0 342.7 251.2 342.6 C247.4 342.5 242.0 342.6 238.6 341.9 C235.3 341.2 232.8 339.6 231.1 338.3 C229.4 337.1 230.2 336.3 228.5 334.4 C226.8 332.5 223.2 328.9 221.1 327.0 C219.0 325.1 217.6 323.7 216.0 323.1 C214.4 322.5 215.8 323.4 211.7 323.2 C207.6 323.0 199.6 321.7 191.6 321.9 C183.7 322.1 169.4 323.6 164.0 324.5 C158.6 325.4 159.0 327.0 159.0 327.0 C159.0 327.0 151.4 336.3 148.9 339.0 C146.4 341.7 147.3 341.8 144.0 343.3 C140.7 344.9 133.7 346.8 128.9 348.3 C124.1 349.8 117.8 349.9 115.1 352.1 C112.4 354.3 112.6 361.6 112.6 361.6"/>
<path d="M376.6 321.4 C376.6 321.4 386.8 316.2 391.7 313.1 C396.6 310.0 406.0 302.9 406.0 302.9 C406.0 302.9 411.8 298.4 416.0 296.7 C420.2 295.0 426.3 293.1 431.1 292.9 C435.9 292.7 439.9 296.0 444.9 295.4 C449.9 294.8 456.8 292.5 461.2 289.1 C465.6 285.8 468.1 278.6 471.2 275.3 C474.3 272.0 480.0 269.1 480.0 269.1 C480.0 269.1 487.7 269.5 491.3 271.6 C494.9 273.7 498.9 277.6 501.4 281.6 C503.9 285.6 504.3 291.0 506.4 295.4 C508.5 299.8 510.1 304.0 513.9 308.0 C517.7 312.0 524.4 316.7 529.0 319.2 C533.6 321.7 538.2 323.4 541.5 323.0 C544.8 322.6 546.5 320.1 549.0 316.7 C551.5 313.3 554.1 305.7 556.6 302.9 C559.1 300.1 560.8 299.3 564.1 299.7 C567.4 300.1 572.0 303.2 576.6 305.4 C581.2 307.6 588.1 311.9 591.7 313.0 C595.3 314.1 595.2 313.1 598.0 312.0 C600.8 310.9 604.6 308.8 608.5 306.7 C612.4 304.6 621.1 299.2 621.1 299.2 C621.1 299.2 627.3 299.4 633.6 300.4 C639.9 301.4 650.3 305.2 658.7 305.4 C667.1 305.6 675.8 303.1 683.8 301.7 C691.8 300.2 700.9 297.1 706.4 296.7 C711.9 296.3 713.6 297.1 716.5 299.2 C719.4 301.3 722.3 304.6 724.0 309.2 C725.7 313.8 725.2 322.6 726.5 326.8 C727.8 331.0 728.6 332.2 731.5 334.3 C734.4 336.4 744.0 339.3 744.0 339.3"/>
<path d="M376.6 321.4 L371.6 327.0 L362.8 334.5 L361.6 339.5 L345.3 353.3 L346.5 358.4 L344.0 362.1 L345.3 369.7 L344.0 372.7 L341.5 375.9 L342.8 381.0 L339.0 388.5 L331.5 386.0 L330.2 397.3 L321.4 401.0 L313.9 406.0 L306.4 419.8 L300.1 432.4 L296.3 445.0 L300.1 445.0"/>
<path d="M256.2 469.0 L258.7 451.2 L271.2 452.5 L281.3 455.5 L292.6 452.5 L300.1 445.0 L312.6 446.2 L320.2 451.2 L336.5 452.5 L356.6 451.2 L360.3 452.5 L359.6 469.0"/>
<path d="M344.0 372.7 L354.0 372.2 L364.1 377.2 L375.4 381.0 L382.9 378.4 L386.7 372.2 L388.7 364.6 L396.7 372.2 L406.0 376.0 L414.8 379.7 L433.6 385.2 L455.0 391.0 L457.5 386.7 L460.0 389.2 L468.8 386.0 L475.0 389.7 L491.4 372.7 L521.5 378.4 L541.5 382.2 L559.1 389.7 L572.9 392.2 L572.9 381.0 L576.7 374.7 L576.2 362.1 L586.7 358.4 L598.6 362.1 L616.1 362.9 L629.9 360.9 L642.5 364.1 L653.8 364.1 L676.4 371.9"/>
<path d="M382.9 378.4 L384.7 402.3 L381.7 434.9 L382.9 454.9 L379.1 469.0"/>
<path d="M458.0 390.0 L460.0 396.0 L456.2 402.3 L456.2 419.8 L446.2 424.9 L448.7 427.4 L471.3 428.6 L487.6 427.4 L490.1 433.6 L486.3 437.4 L487.6 442.4 L498.9 452.5 L512.0 469.0"/>
<path d="M419.9 201.7 L409.2 224.0 L402.0 239.2 L396.5 240.5 L395.4 249.0 L391.5 250.5 C391.5 250.5 389.5 265.2 390.4 271.7 C391.3 278.1 394.0 284.1 396.7 289.2 C399.4 294.2 406.5 302.0 406.5 302.0"/>
<path d="M482.9 109.2 L491.7 113.0 L492.9 126.8 L495.4 128.0 L484.1 134.3 L484.0 159.0 L467.6 162.8 L463.8 169.1 L465.1 175.3 L471.4 175.3 L480.1 182.9 L485.2 187.9 L486.4 196.7 L483.9 201.7 L486.4 210.5 L482.6 221.8 L475.1 230.6 L483.9 239.3 L485.2 251.9 L481.3 254.0 L472.6 258.2 L471.4 260.7 L480.0 269.1"/>
<path d="M465.1 175.3 L499.0 171.1 L520.3 170.3 L547.4 146.9 L555.0 143.7 L571.3 149.4 L580.1 151.9 L586.3 149.4"/>
<path d="M591.4 98.0 L592.6 106.8 L598.9 108.8 L588.8 113.8 L591.4 120.6 L582.6 130.6 L580.1 134.4 L583.8 138.1 L586.3 149.4"/>
<path d="M586.3 149.4 L588.8 151.9 L590.0 159.5 L598.6 165.6 L614.9 166.1 L618.7 169.1 L620.0 179.1 L623.7 186.6 L633.8 187.9 L632.5 196.7 L640.0 209.2"/>
<path d="M520.3 170.3 L541.6 179.1 L540.4 187.9 L547.9 192.9 L547.9 203.0 L561.7 210.5 L566.0 206.7 L574.8 198.7 L577.3 200.4 L599.9 181.6 L604.9 187.9 L617.4 195.4 L626.2 201.7 L631.2 213.0 L640.0 209.2 L656.3 202.2 L662.6 201.7 L662.6 195.4 L705.3 166.6 L706.5 159.5 L721.6 157.0 L731.6 159.0 L756.7 167.8 L769.7 174.2 L776.2 175.0 L777.2 171.2 L797.6 165.3 L805.0 160.7 L807.8 162.0 L816.2 157.9 L819.9 160.7 L825.5 159.7 L866.0 150.5"/>
<path d="M561.7 210.5 L549.1 221.8 L551.7 224.3 L566.0 225.5 L577.3 228.0 L581.1 235.6 L577.3 243.1 L578.5 249.4 L591.1 255.6 L601.1 259.4 L604.9 263.2 L606.0 269.1 L599.2 275.3 L594.2 282.9 L596.0 285.4 L611.1 292.9 L618.6 294.1 L621.1 299.2"/>
</g>
<circle cx="191.6" cy="261.7" r="2.6" fill="#e3262f"/>
</svg></div>
<div id="dlg" class="abs">
<div class="abs" style="left:0;top:0;width:124px;height:19px;background:#eef2f6;border-radius:3px 3px 0 0"></div>
<svg class="abs" style="left:4px;top:3px" width="10" height="10" viewBox="0 0 10 10"><circle cx="5" cy="5" r="3.8" fill="none" stroke="#5a9a3a" stroke-width="1.6"/><path d="M6.5 6.5 L9 9.2" stroke="#5a9a3a" stroke-width="1.8"/><circle cx="5" cy="5" r="1.3" fill="#f0c83a"/></svg>
<span class="abs" style="left:18px;top:5px;font-size:7px;color:#222;line-height:8px">test...</span>
<div class="abs" style="left:51px;top:8px;width:6px;height:1px;background:#c8c8c8"></div>
<div class="abs" style="left:79px;top:5.5px;width:6.5px;height:6.5px;border:1px solid #333"></div>
<svg class="abs" style="left:107px;top:4.8px" width="8" height="8" viewBox="0 0 8 8"><path d="M0.5 0.5 L7.5 7.5 M7.5 0.5 L0.5 7.5" stroke="#333" stroke-width="0.9"/></svg>
<span class="abs" style="left:10.5px;top:33.5px;font-size:6.8px;color:#333;line-height:8px">id</span>
<div class="abs" style="left:34px;top:29.5px;width:70px;height:14px;background:#fff;border:1px solid #c9c9c9;border-radius:2px;overflow:hidden"><span class="abs" style="left:-0.5px;top:2.5px;font-size:6.7px;color:#111;line-height:8px;white-space:nowrap">d_seq'::regclass)</span></div>
<svg class="abs" style="left:89px;top:33px" width="9" height="7" viewBox="0 0 9 7"><path d="M2.5 0.5 H8.5 V6.5 H2.5 L0.5 3.5Z" fill="#a8a8a8"/><path d="M4 2 L7 5 M7 2 L4 5" stroke="#fff" stroke-width=".8"/></svg>
<svg class="abs" style="left:107px;top:34px" width="6" height="5" viewBox="0 0 6 5"><path d="M0.6 2.8 L2.2 4.4 L5.6 0.6" fill="none" stroke="#3a9a3a" stroke-width="1.1"/></svg>
<span class="abs" style="left:10.5px;top:51px;font-size:6.8px;color:#333;line-height:8px">nazwa</span>
<div class="abs" style="left:34px;top:47.5px;width:73px;height:14px;background:#fff;border:1px solid #5ba5e8;border-radius:2px;overflow:hidden"><span class="abs" style="left:1px;top:2.5px;font-size:6.8px;color:#111;line-height:8px;white-space:nowrap">testowa nazwa</span></div>
<svg class="abs" style="left:92.5px;top:51.5px" width="9" height="7" viewBox="0 0 9 7"><path d="M2.5 0.5 H8.5 V6.5 H2.5 L0.5 3.5Z" fill="#a8a8a8"/><path d="M4 2 L7 5 M7 2 L4 5" stroke="#fff" stroke-width=".8"/></svg>
<div class="abs" style="left:15.5px;top:130px;width:50px;height:13px;background:linear-gradient(#f4f8fc,#e6eef6);border:1px solid #79b8ea;border-radius:2px"><span class="abs" style="left:0;width:48px;text-align:center;top:2px;font-size:6.8px;color:#222;line-height:8px">OK</span></div>
<div class="abs" style="left:69px;top:130px;width:50.5px;height:13px;background:linear-gradient(#fdfdfd,#efefef);border:1px solid #c4c4c4;border-radius:2px"><span class="abs" style="left:0;width:48.5px;text-align:center;top:2px;font-size:6.8px;color:#222;line-height:8px">Anuluj</span></div>
</div>
</body></html>
